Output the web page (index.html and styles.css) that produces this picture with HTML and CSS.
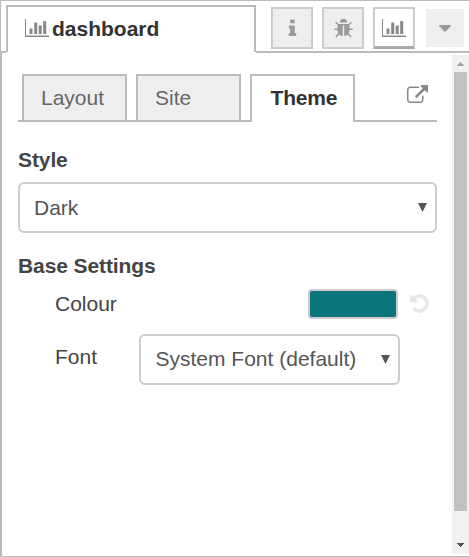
FILE: index.html
```html
<!DOCTYPE html>
<html lang="en">
<head>
<meta charset="utf-8">
<title>dashboard</title>
<link rel="stylesheet" href="styles.css">
</head>
<body>
<svg class="symbols" aria-hidden="true">
  <symbol id="chart" viewBox="0 0 24 18"><path d="M0 0h1v16.500h23V18H0zM4.500 9.500h3V15h-3zM9.200 3.500h3V15h-3zM13.700 6.500h3V15h-3zM18.200 2h3v13h-3z"/></symbol>
</svg>
<div class="sidebar">
  <header class="topbar">
    <div class="edge"></div>
    <div class="main-tab"><svg class="icon-chart"><use href="#chart"/></svg><span>dashboard</span></div>
    <div class="actions">
      <button class="tool"><svg class="icon" viewBox="0 0 1792 1792"><path d="M1216 1344v128q0 26-19 45t-45 19h-512q-26 0-45-19t-19-45v-128q0-26 19-45t45-19h64v-384h-64q-26 0-45-19t-19-45v-128q0-26 19-45t45-19h384q26 0 45 19t19 45v576h64q26 0 45 19t19 45zm-128-1152v192q0 26-19 45t-45 19h-256q-26 0-45-19t-19-45v-192q0-26 19-45t45-19h256q26 0 45 19t19 45z"/></svg></button>
      <button class="tool"><svg class="icon" viewBox="0 0 1792 1792"><path d="M1696 960q0 26-19 45t-45 19h-224q0 171-67 290l208 209q19 19 19 45t-19 45q-18 19-45 19t-45-19l-198-197q-5 5-15 13t-42 28.500-65 36.500-82 29-97 13v-896h-128v896q-51 0-101.500-13.500t-87-33-66-39-43.500-32.500l-15-14-183 207q-20 21-48 21-24 0-43-16-19-18-20.500-44.500t15.500-46.500l202-227q-58-114-58-274h-224q-26 0-45-19t-19-45 19-45 45-19h224v-294l-173-173q-19-19-19-45t19-45 45-19 45 19l173 173h844l173-173q19-19 45-19t45 19 19 45-19 45l-173 173v294h224q26 0 45 19t19 45zm-480-576h-640q0-133 93.500-226.500t226.500-93.500 226.500 93.500 93.500 226.500z"/></svg></button>
      <button class="tool selected"><svg class="icon-chart"><use href="#chart"/></svg></button>
      <button class="more"><svg class="caret" viewBox="0 0 12 7"><path d="M.7 0h10.600q.9.400.3 1.200L6.600 6.500q-.6.600-1.200 0L.4 1.200Q-.2.400.7 0z"/></svg></button>
    </div>
  </header>
  <div class="body">
    <main class="content">
      <nav class="tabs">
        <div class="tab">Layout</div>
        <div class="tab">Site</div>
        <div class="tab active">Theme</div>
        <div class="tabs-end"><svg class="icon" viewBox="0 0 1792 1792"><path d="M1408 928v320q0 119-84.500 203.500t-203.500 84.500h-832q-119 0-203.500-84.500t-84.500-203.500v-832q0-119 84.500-203.500t203.500-84.500h704q14 0 23 9t9 23v64q0 14-9 23t-23 9h-704q-66 0-113 47t-47 113v832q0 66 47 113t113 47h832q66 0 113-47t47-113v-320q0-14 9-23t23-9h64q14 0 23 9t9 23zm384-864v512q0 26-19 45t-45 19-45-19l-176-176-652 652q-10 10-23 10t-23-10l-114-114q-10-10-10-23t10-23l652-652-176-176q-19-19-19-45t19-45 45-19h512q26 0 45 19t19 45z"/></svg></div>
      </nav>
      <h2 class="style-title">Style</h2>
      <div class="select"><span>Dark</span><i class="arrow"></i></div>
      <h2 class="base-title">Base Settings</h2>
      <div class="row colour-row">
        <span class="label">Colour</span>
        <div class="swatch"></div>
        <svg class="icon undo" viewBox="0 0 1792 1792"><path d="M1664 896q0 156-61 298t-164 245-245 164-298 61q-172 0-327-72.500t-264-204.500q-7-10-6.500-22.500t8.500-20.500l137-138q10-9 25-9 16 2 23 12 73 95 179 147t225 52q104 0 198.500-40.500t163.500-109.500 109.500-163.500 40.500-198.500-40.500-198.500-109.500-163.500-163.500-109.500-198.500-40.500q-98 0-188 35.500t-160 101.500l137 138q31 30 14 69-17 40-59 40h-448q-26 0-45-19t-19-45v-448q0-42 40-59 39-17 69 14l130 129q107-101 244.500-156.500t284.500-55.500q156 0 298 61t245 164 164 245 61 298z"/></svg>
      </div>
      <div class="row font-row">
        <span class="label">Font</span>
        <div class="select"><span>System Font (default)</span><i class="arrow"></i></div>
      </div>
    </main>
    <div class="scrollbar">
      <svg class="scroll-up" viewBox="0 0 7 4" shape-rendering="crispEdges"><path d="M3 0h1v1h1v1h1v1h1v1H0V3h1V2h1V1h1z"/></svg>
      <div class="thumb"></div>
      <svg class="scroll-down" viewBox="0 0 7 4" shape-rendering="crispEdges"><path d="M0 0h7v1H6v1H5v1H4v1H3V3H2V2H1V1H0z"/></svg>
    </div>
  </div>
</div>
</body>
</html>
```
FILE: styles.css
```css
* { box-sizing: border-box; }
body {
  margin: 0;
  background: #fff;
  font: 21px/24px "Liberation Sans", Arial, sans-serif;
  color: #444;
}
svg { display: block; flex: none; }
.symbols { width: 0; height: 0; position: absolute; }
.sidebar {
  height: 557px;
  display: flex;
  flex-direction: column;
  border-top: 1px solid #bbb;
  border-bottom: 1px solid #bbb;
  overflow: hidden;
}
.topbar { height: 52px; display: flex; flex: none; }
.edge { width: 6px; border-left: 1px solid #bbb; border-bottom: 2px solid #bbb; }
.main-tab {
  width: 250px;
  height: 47px;
  margin-top: 4px;
  padding: 10px 0 0 17px;
  border: 2px solid #bbb;
  border-bottom: 0;
  display: flex;
  gap: 3px;
  color: #333;
  font-weight: bold;
}
.icon { width: 21px; height: 21px; fill: currentColor; }
.icon-chart { width: 24px; height: 18px; fill: #888; }
.main-tab .icon-chart { margin-top: 2px; }
.actions {
  flex: 1;
  display: flex;
  gap: 9px;
  padding: 6px 0 0 15px;
  border-bottom: 2px solid #bbb;
}
.tool, .more {
  width: 42px;
  height: 42px;
  padding: 0;
  display: flex;
  align-items: center;
  justify-content: center;
  flex: none;
  color: #999;
  background: #eee;
  border: 2px solid #ccc;
}
.tool .icon { margin-top: 1px; }
.selected { background: #fff; border-bottom: 3px solid #aaa; }
.more { width: 38px; height: 38px; margin: 2px 0 0 2px; border: 0; }
.caret { width: 12px; height: 7px; fill: #999; }
.body { flex: 1; display: flex; border-left: 2px solid #bbb; }
.content { width: 450px; padding: 21px 15px 0 16px; }
.tabs { display: flex; gap: 9px; height: 48px; padding-left: 4px; position: relative; }
.tabs::before {
  content: "";
  position: absolute;
  left: 0;
  right: 0;
  bottom: 0;
  height: 2px;
  background: #bbb;
}
.tab {
  width: 105px;
  padding: 10px 0 0 17px;
  border: 2px solid #bbb;
  background: #eee;
  color: #666;
}
.active {
  position: relative;
  padding-left: 18.5px;
  border-bottom: 0;
  background: #fff;
  color: #333;
  font-weight: bold;
  letter-spacing: -0.2px;
}
.tabs-end { flex: 1; padding: 11px 0 0 43px; color: #888; }
.tabs-end .icon { overflow: visible; }
h2 { margin: 0; font-size: 21px; line-height: 24px; letter-spacing: -0.1px; }
.style-title { margin-top: 26px; }
.select {
  height: 51px;
  margin-top: 10px;
  padding: 0 8px 0 14px;
  display: flex;
  align-items: center;
  justify-content: space-between;
  border: 2px solid #ccc;
  border-radius: 6px;
  color: #555;
}
.arrow {
  width: 9px;
  height: 9px;
  background: #555;
  clip-path: polygon(0 0, 100% 0, 50% 100%);
}
.base-title { margin-top: 21px; }
.row { display: flex; padding-left: 37px; }
.colour-row { margin-top: 11px; height: 30px; }
.label { padding-top: 3px; }
.swatch {
  width: 90px;
  height: 30px;
  margin-left: auto;
  border: 2px solid #ccc;
  border-radius: 4px;
  background: #097479;
}
.undo { margin: 4px 7px 0 11px; color: #e6e6e6; stroke: #e6e6e6; stroke-width: 50px; }
.font-row { margin-top: 15px; }
.font-row .label { width: 84px; padding-top: 11px; }
.font-row .select { width: 261px; margin: 0; padding: 0 8px 1px 14.5px; }
.font-row .arrow { margin-top: 1px; }
.scrollbar {
  width: 17px;
  margin: 2px 0;
  background: #f1f1f1;
  display: flex;
  flex-direction: column;
  align-items: center;
}
.scroll-up { width: 7px; height: 4px; margin-top: 7px; fill: #a3a3a3; }
.thumb { width: 13px; height: 439px; margin-top: 6px; background: #c1c1c1; }
.scroll-down { width: 7px; height: 4px; margin-top: 32px; fill: #505050; }
```
